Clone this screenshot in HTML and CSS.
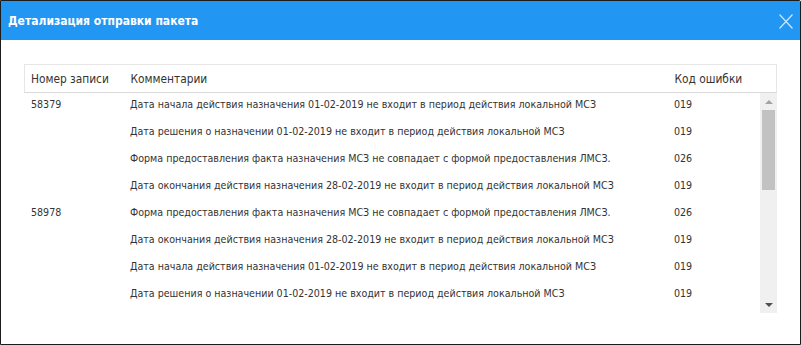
FILE: index.html
```html
<!DOCTYPE html>
<html lang="ru">
  <head>
    <meta charset="UTF-8">
    <meta name="viewport" content="width=device-width, initial-scale=1.0">
    <title>Детализация отправки пакета</title>
    <link rel="stylesheet" href="styles.css">
  </head>
  <body>
    <div class="dialog">
      <div class="dialog-header">
        <span class="dialog-title">Детализация отправки пакета</span>
        <button class="dialog-close" aria-label="Закрыть">
          <svg width="14" height="15" viewBox="0 0 14 15">
            <path d="M0.5 0.5L13.5 14.5M13.5 0.5L0.5 14.5" stroke="currentColor" stroke-width="1.2" fill="none"/>
          </svg>
        </button>
      </div>
      <div class="dialog-body">
        <div class="grid">
          <table class="grid-head">
            <colgroup>
              <col class="col-num">
              <col class="col-comment">
              <col>
            </colgroup>
            <tr>
              <th>Номер записи</th>
              <th>Комментарии</th>
              <th>Код ошибки</th>
            </tr>
          </table>
          <div class="grid-body">
            <div class="grid-rows-wrap">
              <table class="grid-rows">
                <colgroup>
                  <col class="col-num">
                  <col class="col-comment">
                  <col>
                </colgroup>
                <tr><td>58379</td><td>Дата начала действия назначения 01-02-2019 не входит в период действия локальной МСЗ</td><td>019</td></tr>
                <tr><td></td><td>Дата решения о назначении 01-02-2019 не входит в период действия локальной МСЗ</td><td>019</td></tr>
                <tr><td></td><td>Форма предоставления факта назначения МСЗ не совпадает с формой предоставления ЛМСЗ.</td><td>026</td></tr>
                <tr><td></td><td>Дата окончания действия назначения 28-02-2019 не входит в период действия локальной МСЗ</td><td>019</td></tr>
                <tr><td>58978</td><td>Форма предоставления факта назначения МСЗ не совпадает с формой предоставления ЛМСЗ.</td><td>026</td></tr>
                <tr><td></td><td>Дата окончания действия назначения 28-02-2019 не входит в период действия локальной МСЗ</td><td>019</td></tr>
                <tr><td></td><td>Дата начала действия назначения 01-02-2019 не входит в период действия локальной МСЗ</td><td>019</td></tr>
                <tr><td></td><td>Дата решения о назначении 01-02-2019 не входит в период действия локальной МСЗ</td><td>019</td></tr>
              </table>
            </div>
            <div class="scrollbar">
              <span class="scroll-btn"><span class="arrow-up"></span></span>
              <div class="scroll-track">
                <div class="scroll-thumb"></div>
              </div>
              <span class="scroll-btn"><span class="arrow-down"></span></span>
            </div>
          </div>
        </div>
      </div>
    </div>
  </body>
</html>
```

FILE: styles.css
```css
body {
  margin: 0;
  font-family: "DejaVu Sans Condensed", "DejaVu Sans", sans-serif;
  font-size: 10.6px;
  color: #333;
  background-color: #fff;
}

.dialog {
  width: 799px;
  height: 343px;
  border: 1px solid #1c1c1c;
  border-top-right-radius: 2px;
  background-color: #fff;
  overflow: hidden;
}

.dialog-header {
  height: 39px;
  padding: 0 7px;
  display: flex;
  justify-content: space-between;
  align-items: center;
  background-color: #2196f3;
}

.dialog-title {
  color: #fff;
  font-size: 12px;
  font-weight: bold;
}

.dialog-close {
  padding: 0;
  margin-top: 2px;
  border: none;
  background: none;
  color: #cfe6fc;
  display: flex;
  cursor: pointer;
}

.dialog-body {
  padding: 24px 23px 0;
}

.grid {
  width: 753px;
}

table {
  width: 100%;
  border-collapse: collapse;
  table-layout: fixed;
}

.col-num {
  width: 100px;
}

.col-comment {
  width: 544px;
}

.grid-head {
  border: 1px solid #e6e6e6;
  border-bottom-color: #d9d9d9;
}

.grid-head th {
  height: 27px;
  padding: 0 6px;
  text-align: left;
  font-weight: normal;
  font-size: 11.8px;
  color: #333;
}

.grid-body {
  height: 220px;
  display: flex;
}

.grid-rows-wrap {
  flex: 1;
  overflow: hidden;
}

.grid-rows td {
  height: 26px;
  padding: 1px 6px 0;
  line-height: 20px;
  vertical-align: top;
  white-space: nowrap;
}

.grid-rows td:first-child {
  padding-left: 7px;
}

/* vertical scrollbar */
.scrollbar {
  width: 17px;
  display: flex;
  flex-direction: column;
  background-color: #f0f0f0;
}

.scroll-btn {
  height: 17px;
  display: flex;
  justify-content: center;
  align-items: center;
}

.arrow-up {
  border-left: 4px solid transparent;
  border-right: 4px solid transparent;
  border-bottom: 4px solid #a3a3a3;
}

.arrow-down {
  border-left: 4px solid transparent;
  border-right: 4px solid transparent;
  border-top: 4px solid #505050;
}

.scroll-track {
  flex: 1;
  padding: 0 2px;
}

.scroll-thumb {
  height: 80px;
  background-color: #c2c2c2;
}
```
